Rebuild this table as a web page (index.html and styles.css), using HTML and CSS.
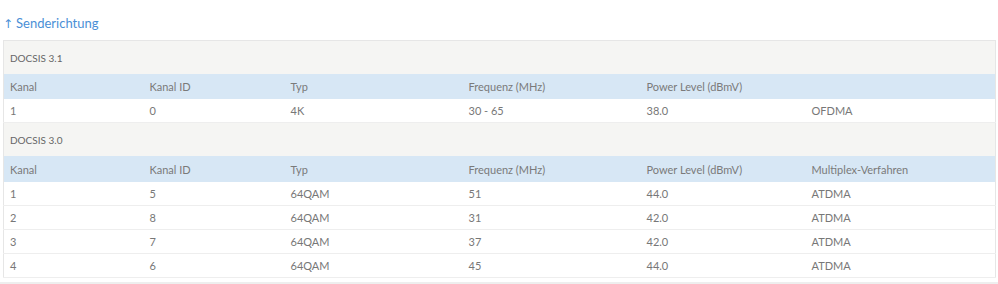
FILE: index.html
```html
<!DOCTYPE html>
<html>
<head>
<meta charset="utf-8">
<link rel="stylesheet" href="styles.css">
</head>
<body>
<div class="page">
  <h2 class="title"><span class="arrow">↑</span>Senderichtung</h2>
  <table class="tbl">
    <colgroup>
      <col class="c1"><col class="c2"><col class="c3"><col class="c4"><col class="c5"><col class="c6">
    </colgroup>
    <tbody>
      <tr class="sec"><td colspan="6">DOCSIS 3.1</td></tr>
      <tr class="head"><td>Kanal</td><td>Kanal ID</td><td>Typ</td><td>Frequenz (MHz)</td><td>Power Level (dBmV)</td><td></td></tr>
      <tr class="row"><td>1</td><td>0</td><td>4K</td><td>30 - 65</td><td>38.0</td><td>OFDMA</td></tr>
      <tr class="sec"><td colspan="6">DOCSIS 3.0</td></tr>
      <tr class="head"><td>Kanal</td><td>Kanal ID</td><td>Typ</td><td>Frequenz (MHz)</td><td>Power Level (dBmV)</td><td>Multiplex-Verfahren</td></tr>
      <tr class="row"><td>1</td><td>5</td><td>64QAM</td><td>51</td><td>44.0</td><td>ATDMA</td></tr>
      <tr class="row"><td>2</td><td>8</td><td>64QAM</td><td>31</td><td>42.0</td><td>ATDMA</td></tr>
      <tr class="row"><td>3</td><td>7</td><td>64QAM</td><td>37</td><td>42.0</td><td>ATDMA</td></tr>
      <tr class="row"><td>4</td><td>6</td><td>64QAM</td><td>45</td><td>44.0</td><td>ATDMA</td></tr>
    </tbody>
  </table>
  <div class="next"></div>
</div>
</body>
</html>
```
FILE: styles.css
```css
html, body {
  margin: 0;
  padding: 0;
  background: #fff;
}
.page {
  padding: 0 2px 0 3px;
  font-family: Lato, "Liberation Sans", sans-serif;
  color: #777;
}
.title {
  margin: 0;
  padding-top: 14px;
  height: 26px;
  font-size: 13px;
  font-weight: normal;
  color: #4a8fd6;
  line-height: 18px;
}
.arrow {
  font-family: "DejaVu Sans", sans-serif;
  font-size: 12px;
  margin-right: 3px;
}
.tbl {
  width: 100%;
  border-collapse: collapse;
  table-layout: fixed;
  font-size: 11px;
  border: 1px solid #e6e6e6;
}
.c1 { width: 140px; }
.c2 { width: 141px; }
.c3 { width: 178px; }
.c4 { width: 178px; }
.c5 { width: 165px; }
.tbl td {
  padding: 0 0 0 6px;
  white-space: nowrap;
}
.sec td {
  background: #f5f5f3;
  height: 33px;
  color: #666;
  font-size: 10px;
}
.head td {
  background: #d7e7f5;
  height: 25px;
  color: #7a7a7a;
}
.sec + .head + .row + .sec + .head td {
  height: 26px;
}
.row td {
  background: #fff;
  height: 23px;
  border-bottom: 1px solid #eeeeee;
  color: #777;
}
.next {
  margin-top: 4px;
  border-top: 3px solid #eeeeee;
  margin-left: -3px;
  margin-right: -2px;
}
```
